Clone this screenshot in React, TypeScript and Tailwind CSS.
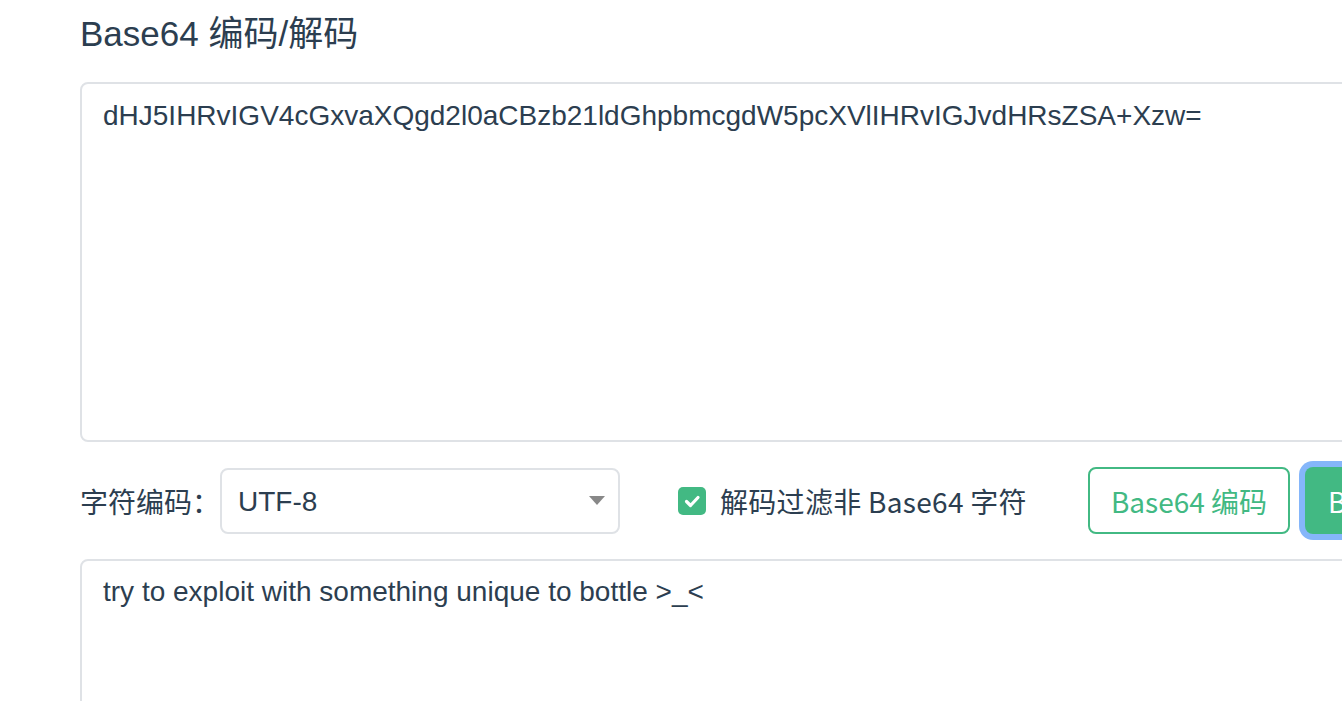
import { useState } from "react";

const encoded =
  "dHJ5IHRvIGV4cGxvaXQgd2l0aCBzb21ldGhpbmcgdW5pcXVlIHRvIGJvdHRsZSA+Xzw=";
const decoded = "try to exploit with something unique to bottle >_<";

export default function App() {
  const [input, setInput] = useState(encoded);
  const [output, setOutput] = useState(decoded);
  const [filter, setFilter] = useState(true);

  return (
    <div className="w-screen h-screen overflow-hidden bg-white text-[#2c3e50]">
      <div className="w-[1480px] pl-[80px] pt-[14px] flex flex-col">
        {/* 标题 */}
        <h1 className="text-[35px] leading-[40px] font-normal font-['Liberation_Sans','Noto_Sans_CJK_SC',sans-serif]">
          Base64 编码/解码
        </h1>

        {/* 输入 */}
        <textarea
          value={input}
          onChange={(e) => setInput(e.target.value)}
          className="mt-[28px] w-full h-[360px] resize-none border-2 border-[#dfe2e6] rounded-[8px] px-[21px] py-[11px] text-[28px] leading-[42px] text-[#2c3e50] outline-none font-['Liberation_Sans','Noto_Sans_CJK_SC',sans-serif]"
        />

        {/* 选项 */}
        <div className="mt-[25px] h-[67px] flex items-center font-['Noto_Sans_CJK_SC',sans-serif] text-[28px]">
          <span className="w-[140px] shrink-0">字符编码：</span>
          <div className="w-[400px] h-[66px] shrink-0 border-2 border-[#dfe2e6] rounded-[8px] flex items-center justify-between pl-[16px] pr-[13px]">
            <span className="pt-[3px] font-['Liberation_Sans',sans-serif] text-[28px]">UTF-8</span>
            <svg width="16" height="10" viewBox="0 0 16 10">
              <path d="M0 0 L16 0 L8 9 Z" fill="#888888" />
            </svg>
          </div>
          <label className="ml-[58px] w-[410px] shrink-0 flex items-center cursor-pointer">
            <span
              onClick={() => setFilter(!filter)}
              className={`w-[28px] h-[28px] rounded-[5px] flex items-center justify-center ${
                filter ? "bg-[#42b983]" : "border-2 border-[#dfe2e6] bg-white"
              }`}
            >
              {filter && (
                <svg width="28" height="28" viewBox="0 0 28 28">
                  <path
                    d="M8.5 14.5 L12.5 18.5 L20 10.5"
                    fill="none"
                    stroke="white"
                    strokeWidth="3.2"
                    strokeLinecap="round"
                    strokeLinejoin="round"
                  />
                </svg>
              )}
            </span>
            <span className="ml-[14px] leading-none tracking-[0.3px]">解码过滤非 Base64 字符</span>
          </label>
          <button className="w-[202px] h-[67px] shrink-0 border-2 border-[#42b983] rounded-[8px] text-[#42b983] bg-white">
            Base64 编码
          </button>
          <button className="ml-[15px] w-[202px] h-[67px] shrink-0 rounded-[8px] bg-[#42b983] text-white ring-[6px] ring-[#85b6fa]">
            Base64 解码
          </button>
        </div>

        {/* 输出 */}
        <textarea
          value={output}
          onChange={(e) => setOutput(e.target.value)}
          className="mt-[25px] w-full h-[300px] resize-none border-2 border-[#dfe2e6] rounded-[8px] px-[21px] pt-[10px] pb-[11px] text-[28px] leading-[42px] text-[#2c3e50] outline-none font-['Liberation_Sans','Noto_Sans_CJK_SC',sans-serif]"
        />
      </div>
    </div>
  );
}
